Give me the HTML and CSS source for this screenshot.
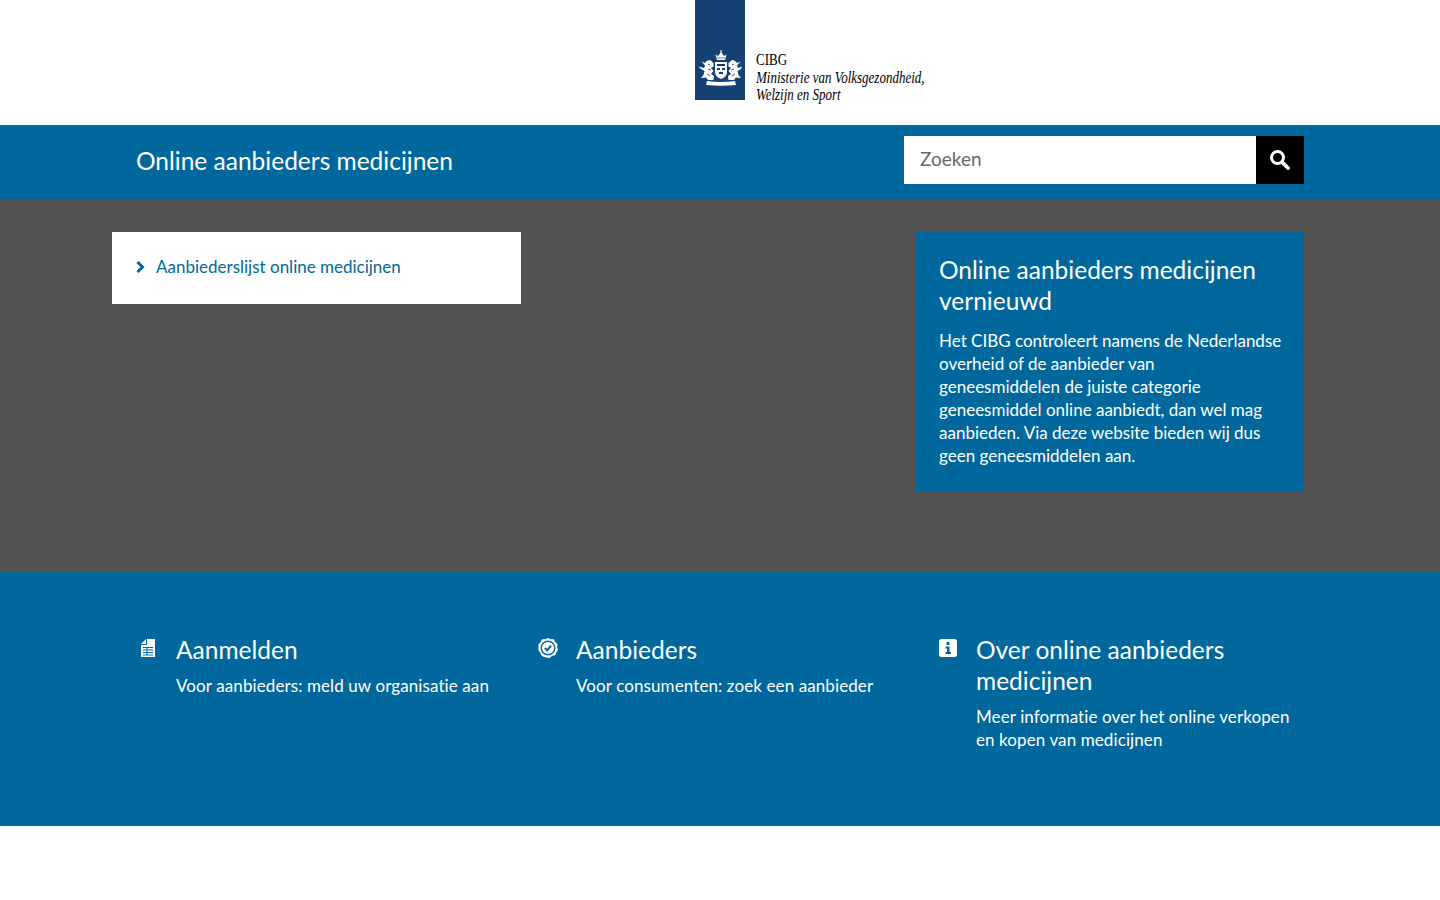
FILE: index.html
```html
<!DOCTYPE html>
<html lang="nl">
  <head>
    <meta charset="UTF-8" />
    <meta name="viewport" content="width=device-width, initial-scale=1.0" />
    <title>Online aanbieders medicijnen</title>
    <link rel="stylesheet" href="styles.css">
  </head>

  <body>
    <header class="logo-bar">
      <a class="logo" href="#">
        <span class="logo-ribbon">
          <svg class="emblem" viewBox="0 0 44 36" width="44" height="36" fill="#fff">
            <!-- crown -->
            <path d="M19 10 L17.500 4.500 L20 6 L23 2 L26 6 L28.500 4.500 L27 10 Z" />
            <rect x="22.500" y="0" width="1" height="3" />
            <path d="M19 8 H27" stroke="#154273" stroke-width="0.700" />
            <!-- shield -->
            <path d="M17 12 H29 V22 Q29 27 23 29 Q17 27 17 22 Z" />
            <path d="M19 14 H27 V16 H19 Z M19 18 H22 V20 H19 Z M24 18 H27 V20 H24 Z M21 22 H25 V24 H21 Z" fill="#154273" />
            <!-- lions -->
            <path d="M15.500 13 L12 10 L8.500 11 L7 13 L3.500 11.500 L7 15.500 L6 18 L0.500 16.500 L3 19 L6.500 21 L5.500 25 L3 28 L8 27.500 L10 30 L15.500 30 L16 26 L13 24 L15.500 21 L13 18 L15.500 16.500 Z" />
            <path d="M30.500 13 L34 10 L37.500 11 L39 13 L42.500 11.500 L39 15.500 L40 18 L44 16.500 L43 19 L39.500 21 L40.500 25 L43 28 L38 27.500 L36 30 L30.500 30 L30 26 L33 24 L30.500 21 L33 18 L30.500 16.500 Z" />
            <path d="M10 14 L12 15 M10 19 L13 20 M9 24 L12 26 M36 14 L34 15 M36 19 L33 20 M37 24 L34 26" stroke="#154273" stroke-width="0.800" />
            <!-- motto band -->
            <path d="M9 31 Q23 33 37 31 L38 35 Q23 36.500 8 35 Z" />
          </svg>
        </span>
        <span class="logo-text">
          <span class="logo-org">CIBG</span>
          <em>Ministerie van Volksgezondheid,</em>
          <em>Welzijn en Sport</em>
        </span>
      </a>
    </header>

    <div class="site-bar">
      <div class="container site-bar-inner">
        <a class="site-title" href="#">Online aanbieders medicijnen</a>
        <form class="search">
          <input class="search-input" type="text" placeholder="Zoeken" />
          <button class="search-button" type="button" aria-label="Zoeken">
            <svg viewBox="0 0 22 22" width="22" height="22" fill="none" stroke="#fff">
              <circle cx="8.500" cy="8.500" r="6" stroke-width="3" />
              <path d="M13.500 13.500 L19 19" stroke-width="3.800" stroke-linecap="round" />
            </svg>
          </button>
        </form>
      </div>
    </div>

    <main class="content">
      <div class="container content-inner">
        <nav class="menu-card">
          <a class="menu-link" href="#">
            <svg class="chevron" viewBox="0 0 9 12" width="9" height="12" fill="none" stroke="#00689d" stroke-width="3">
              <path d="M1.500 1 L6.500 6 L1.500 11" />
            </svg>
            Aanbiederslijst online medicijnen
          </a>
        </nav>
        <aside class="news-card">
          <h2>Online aanbieders medicijnen vernieuwd</h2>
          <p>Het CIBG controleert namens de Nederlandse<br>
          overheid of de aanbieder van<br>
          geneesmiddelen de juiste categorie<br>
          geneesmiddel online aanbiedt, dan wel mag<br>
          aanbieden. Via deze website bieden wij dus<br>
          geen geneesmiddelen aan.</p>
        </aside>
      </div>
    </main>

    <section class="tasks">
      <div class="container tasks-inner">
        <a class="task" href="#">
          <span class="task-icon">
            <svg viewBox="0 0 14 18" width="14" height="18">
              <path d="M5 0 H14 V18 H0 V5 Z" fill="#fff" />
              <path d="M5.500 0 V5.500 H0" stroke="#00689d" stroke-width="1" fill="none" />
              <path d="M2 8.500 H12 M2 11 H12 M2 13.500 H12 M2 16 H12 M6 8.500 V16" stroke="#00689d" stroke-width="1" fill="none" />
            </svg>
          </span>
          <span class="task-body">
            <span class="task-title">Aanmelden</span>
            <span class="task-text">Voor aanbieders: meld uw organisatie aan</span>
          </span>
        </a>
        <a class="task" href="#">
          <span class="task-icon">
            <svg viewBox="0 0 22 22" width="20" height="20">
              <path d="M11 0 L14 1.500 L17.500 1.500 L19 4.500 L21.500 7 L21 10.500 L22 13 L20 16 L19 19 L15.500 19.500 L13 22 L9.500 21.500 L6.500 21 L3.500 19 L2.500 16 L0.500 13.500 L0.500 10 L0.500 7 L3 4.500 L4.500 1.500 L8 1.500 Z" fill="#fff" />
              <circle cx="11" cy="11" r="7.500" fill="none" stroke="#00689d" stroke-width="1.600" />
              <path d="M7.500 11 L10 13.500 L14.500 8.500" fill="none" stroke="#00689d" stroke-width="2.200" />
            </svg>
          </span>
          <span class="task-body">
            <span class="task-title">Aanbieders</span>
            <span class="task-text">Voor consumenten: zoek een aanbieder</span>
          </span>
        </a>
        <a class="task" href="#">
          <span class="task-icon">
            <svg viewBox="0 0 18 18" width="18" height="18">
              <rect width="18" height="18" rx="2.500" fill="#fff" />
              <rect x="7.500" y="3" width="3" height="3" fill="#00689d" />
              <path d="M6.500 7.500 H10.500 V13 H12 V15 H6.500 V13 H8 V9.500 H6.500 Z" fill="#00689d" />
            </svg>
          </span>
          <span class="task-body">
            <span class="task-title">Over online aanbieders medicijnen</span>
            <span class="task-text">Meer informatie over het online verkopen en kopen van medicijnen</span>
          </span>
        </a>
      </div>
    </section>
  </body>
</html>
```

FILE: styles.css
```css
body {
  font-family: Lato, "Noto Sans", sans-serif;
  margin: 0;
  background-color: #fff;
  color: #fff;
}

a {
  color: inherit;
  text-decoration: none;
}

.container {
  width: 1192px;
  margin-left: 112px;
}

/* logo */
.logo-bar {
  height: 125px;
  display: flex;
}

.logo {
  display: flex;
  margin-left: 695px;
}

.logo-ribbon {
  width: 50px;
  height: 100px;
  background-color: #154273;
  display: flex;
  align-items: flex-end;
  justify-content: center;
  padding-bottom: 14px;
  box-sizing: border-box;
}

.logo-text {
  display: flex;
  flex-direction: column;
  align-items: flex-start;
  margin: 51px 0 0 11px;
  font-family: "Liberation Serif", serif;
  font-size: 16px;
  line-height: 17.500px;
  color: #000;
  transform: scaleX(0.812);
  transform-origin: left top;
}

/* site bar */
.site-bar {
  background-color: #00689d;
  height: 75px;
}

.site-bar-inner {
  height: 100%;
  display: flex;
  align-items: center;
  justify-content: space-between;
}

.site-title {
  margin: 0 0 4px 24px;
  font-size: 24.500px;
  line-height: 31px;
}

.search {
  display: flex;
  margin-bottom: 6px;
}

.search-input {
  width: 352px;
  height: 48px;
  box-sizing: border-box;
  padding: 0 16px 3px;
  border: none;
  border-radius: 0;
  font-family: inherit;
  font-size: 19px;
  background-color: #fff;
}

.search-input::placeholder {
  color: #696969;
}

.search-button {
  width: 48px;
  height: 48px;
  padding: 0;
  border: none;
  background-color: #000;
  display: flex;
  align-items: center;
  justify-content: center;
}

/* content */
.content {
  background-color: #535353;
  height: 371px;
}

.content-inner {
  display: flex;
  justify-content: space-between;
  align-items: flex-start;
  padding-top: 32px;
}

.menu-card {
  width: 409px;
  height: 72px;
  background-color: #fff;
  display: flex;
  align-items: center;
  box-sizing: border-box;
  padding: 0 24px;
}

.menu-link {
  display: flex;
  align-items: center;
  gap: 11px;
  color: #00689d;
  font-size: 17px;
  line-height: 23px;
  margin-bottom: 3px;
}

.news-card {
  width: 388px;
  height: 259px;
  box-sizing: border-box;
  background-color: #00689d;
  padding: 22px 12px 22px 23px;
}

.news-card h2 {
  margin: 0 20px 13px 0;
  font-size: 24.500px;
  line-height: 31px;
  font-weight: 400;
}

.news-card p {
  margin: 0;
  font-size: 17px;
  line-height: 23px;
}

/* tasks */
.tasks {
  background-color: #00689d;
  height: 255px;
}

.tasks-inner {
  display: grid;
  grid-template-columns: 400px 400px 392px;
  padding-top: 63px;
}

.task {
  display: flex;
  padding-left: 24px;
}

.task-icon {
  width: 24px;
  height: 28px;
  margin-right: 16px;
  display: flex;
  justify-content: center;
  align-items: center;
}

.task-body {
  display: flex;
  flex-direction: column;
  flex: 1;
}

.task-title {
  font-size: 24.500px;
  line-height: 31px;
  margin-bottom: 9px;
}

.task-text {
  font-size: 17px;
  line-height: 23px;
  letter-spacing: 0.100px;
}
```
